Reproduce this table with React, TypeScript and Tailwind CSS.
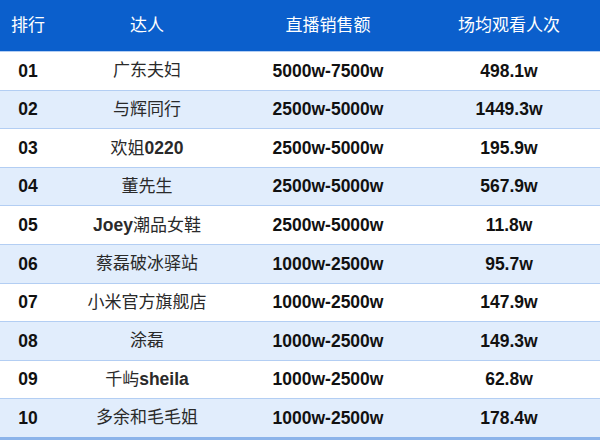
import React from "react";

const B = ({ children }: { children: React.ReactNode }) => (
  <span className="inline-block font-bold text-[17.5px]" style={{ fontFamily: '"Liberation Sans", Arial, sans-serif' }}>{children}</span>
);

const rows: [string, React.ReactNode, string, string][] = [
  ["01", "广东夫妇", "5000w-7500w", "498.1w"],
  ["02", "与辉同行", "2500w-5000w", "1449.3w"],
  ["03", <>欢姐<B>0220</B></>, "2500w-5000w", "195.9w"],
  ["04", "董先生", "2500w-5000w", "567.9w"],
  ["05", <><B>Joey</B>潮品女鞋</>, "2500w-5000w", "11.8w"],
  ["06", "蔡磊破冰驿站", "1000w-2500w", "95.7w"],
  ["07", "小米官方旗舰店", "1000w-2500w", "147.9w"],
  ["08", "涂磊", "1000w-2500w", "149.3w"],
  ["09", <>千屿<B>sheila</B></>, "1000w-2500w", "62.8w"],
  ["10", "多余和毛毛姐", "1000w-2500w", "178.4w"],
];

const cols = "grid grid-cols-[56px_182px_180px_182px]";

export default function App() {
  return (
    <div className="w-[600px] h-[441px] bg-white overflow-hidden" style={{ fontFamily: '"Liberation Sans", "Noto Sans CJK SC", sans-serif' }}>
      <div className={`${cols} h-[51px] bg-[#0b5fcc] text-white text-[17px] items-center`}>
        <div className="text-center">排行</div>
        <div className="text-center">达人</div>
        <div className="text-center">直播销售额</div>
        <div className="text-center">场均观看人次</div>
      </div>
      {rows.map((r, i) => (
        <div
          key={i}
          className={`${cols} h-[38.6px] box-border border-t border-[#b3cef3] items-center text-[#111] ${i % 2 === 1 ? "bg-[#e1edfc]" : "bg-white"}`}
        >
          <div className="text-center font-bold text-[17.5px]">{r[0]}</div>
          <div className="text-center text-[17px] text-[#2a2a2a]">{r[1]}</div>
          <div className="text-center font-bold text-[17.5px]">{r[2]}</div>
          <div className="text-center font-bold text-[17.5px]">{r[3]}</div>
        </div>
      ))}
      <div className="h-[3px] bg-[#8cb4ea]" />
    </div>
  );
}
